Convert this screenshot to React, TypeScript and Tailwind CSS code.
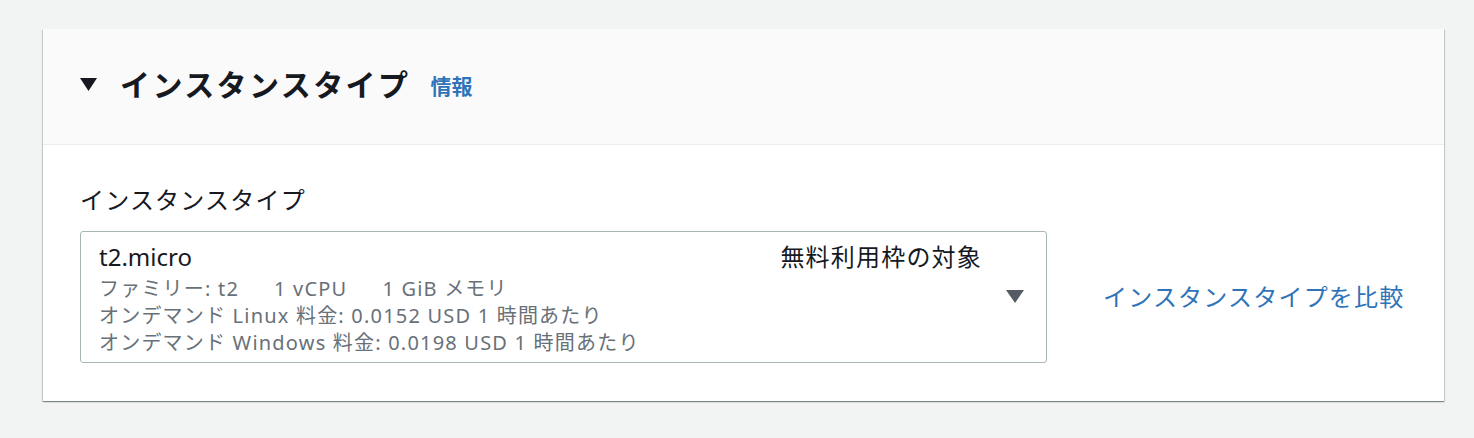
import React from 'react';

const font = { fontFamily: '"Noto Sans", "Noto Sans CJK JP", sans-serif' };

export default function App() {
  return (
    <div className="w-[1474px] h-[438px] bg-[#f2f3f3] pt-[29px] pl-[43px]" style={font}>
      <div className="w-[1401px] bg-white shadow-[0_1px_1px_0_rgba(0,28,36,0.3),1px_1px_1px_0_rgba(0,28,36,0.15),-1px_1px_1px_0_rgba(0,28,36,0.15)]">
        {/* Header */}
        <div className="h-[116px] bg-[#fafafa] border-b border-[#eaeded] flex items-center pl-[37px]">
          <svg width="17" height="13" viewBox="0 0 17 13" className="mr-[23px] mt-[-5px]">
            <polygon points="0,0 17,0 8.5,13" fill="#16191f" />
          </svg>
          <h2 className="text-[30px] font-bold text-[#16191f] tracking-[0.08em] leading-none mt-[-3px]">
            インスタンスタイプ
          </h2>
          <a className="ml-[20px] text-[21px] font-bold text-[#2f74b8] leading-none">情報</a>
        </div>

        {/* Body */}
        <div className="pl-[37px] pt-[40px] pb-[38px]">
          <div className="text-[24px] text-[#16191f] leading-[30px] tracking-[0.05em] mb-[16px]">
            インスタンスタイプ
          </div>
          <div className="flex items-center">
            <div className="w-[967px] h-[132px] border border-[#aab7b8] rounded-[3px] bg-white flex pl-[18px] pr-[22px] pt-[10px]">
              <div className="flex-1">
                <div className="text-[24px] text-[#16191f] leading-[30px]">t2.micro</div>
                <div className="text-[20px] text-[#687078] leading-[27px] tracking-[0.06em] mt-[3px]">
                  <div>
                    ファミリー: t2<span className="inline-block w-[35px]" />1 vCPU
                    <span className="inline-block w-[35px]" />1 GiB メモリ
                  </div>
                  <div>オンデマンド Linux 料金: 0.0152 USD 1 時間あたり</div>
                  <div>オンデマンド Windows 料金: 0.0198 USD 1 時間あたり</div>
                </div>
              </div>
              <div className="flex flex-col items-end">
                <div className="text-[24px] text-[#16191f] leading-[30px] tracking-[0.05em] mr-[42px]">
                  無料利用枠の対象
                </div>
                <svg width="18" height="13" viewBox="0 0 18 13" className="mt-[18px]">
                  <polygon points="0,0 18,0 9,13" fill="#545b64" />
                </svg>
              </div>
            </div>
            <a className="ml-[56px] text-[24px] text-[#2f74b8] tracking-[0.05em] leading-none">
              インスタンスタイプを比較
            </a>
          </div>
        </div>
      </div>
    </div>
  );
}
